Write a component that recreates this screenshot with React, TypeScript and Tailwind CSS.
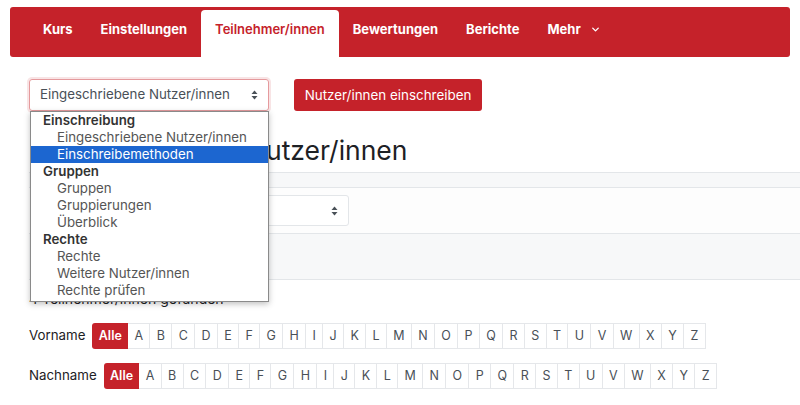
import { ChevronDown } from "lucide-react";

const RED = "bg-[#c5222a]";
const LETTERS = "ABCDEFGHIJKLMNOPQRSTUVWXYZ".split("");

const tabs = ["Kurs", "Einstellungen", "Teilnehmer/innen", "Bewertungen", "Berichte"];

const groups = [
  { label: "Einschreibung", items: ["Eingeschriebene Nutzer/innen", "Einschreibemethoden"] },
  { label: "Gruppen", items: ["Gruppen", "Gruppierungen", "Überblick"] },
  { label: "Rechte", items: ["Rechte", "Weitere Nutzer/innen", "Rechte prüfen"] },
];

const SortArrows = () => (
  <svg width="7" height="10" viewBox="0 0 7 10" className="fill-[#495057]">
    <path d="M3.5 0.5 L6.5 4 H0.5 Z" />
    <path d="M3.5 9.5 L6.5 6 H0.5 Z" />
  </svg>
);

const LetterBar = ({ label }: { label: string }) => (
  <div className="flex items-center gap-[7px]">
    <span className="text-[13.3px] text-[#1d2125]">{label}</span>
    <div className="flex h-[26px] text-[12.5px]">
      <span className={`${RED} text-white font-semibold flex items-center px-[6.35px] rounded-l-[3px]`}>
        Alle
      </span>
      {LETTERS.map((l) => (
        <span
          key={l}
          className="flex items-center px-[6.35px] text-[#495057] border border-l-0 border-[#e5e7ea]"
        >
          {l}
        </span>
      ))}
    </div>
  </div>
);

const App = () => {
  return (
    <div className="w-[800px] h-[405px] overflow-hidden bg-white font-['Inter',sans-serif]">
      <nav className={`mx-[10px] mt-[7px] h-[50px] ${RED} rounded-[3px] flex items-end pl-[19px]`}>
        {tabs.map((t) => {
          const active = t === "Teilnehmer/innen";
          return (
            <div
              key={t}
              className={
                active
                  ? "h-[47px] px-[14px] pt-[9px] leading-[20px] text-[13px] font-semibold text-[#c5222a] bg-white rounded-t-[4px]"
                  : "h-[47px] px-[14px] pt-[9px] leading-[20px] text-[13px] font-bold text-white"
              }
            >
              {t}
            </div>
          );
        })}
        <div className="h-[47px] px-[14px] pt-[9px] leading-[20px] text-[13px] font-bold text-white flex items-start gap-[9px]">
          Mehr
          <ChevronDown size={11} strokeWidth={3} className="mt-[5px]" />
        </div>
      </nav>

      <div className="pl-[29px] pt-[22px]">
        <div className="relative flex gap-[25px]">
          <div className="w-[240px] h-[32px] border border-[#e59a9d] rounded-[3px] shadow-[0_0_0_2px_rgba(197,34,42,0.12)] flex items-center justify-between pl-[10px] pr-[10px] text-[13.3px] text-[#495057]">
            <span>Eingeschriebene Nutzer/innen</span>
            <SortArrows />
          </div>
          <button className={`w-[188px] h-[32px] ${RED} rounded-[3px] text-white text-[13.4px]`}>
            Nutzer/innen einschreiben
          </button>

          <div className="absolute z-10 top-[32px] left-[1px] w-[239px] bg-white border border-[#8a8a8a] shadow-[0_2px_6px_rgba(0,0,0,0.25)] pb-[2px] text-[13.3px] leading-[17px]">
            {groups.map((g) => (
              <div key={g.label}>
                <div className="pl-[12px] font-semibold text-[#333]">{g.label}</div>
                {g.items.map((i) => (
                  <div
                    key={i}
                    className={
                      i === "Einschreibemethoden"
                        ? "pl-[26px] bg-[#1c66d0] text-white"
                        : "pl-[26px] text-[#555]"
                    }
                  >
                    {i}
                  </div>
                ))}
              </div>
            ))}
          </div>
        </div>

        <h2 className="mt-[22px] text-[26.5px] leading-[34px] text-[#1d2125]">
          Eingeschriebene Nutzer/innen
        </h2>

        <div className="mt-[5px] w-[771px] border-t border-[#e3e6e9]">
          <div className="h-[15px] bg-[#f7f8f9] border-b border-[#e3e6e9]" />
          <div className="h-[46px] border-b border-[#e3e6e9] bg-[#fdfdfd] flex items-center pl-[15px]">
            <div className="w-[305px] h-[31px] bg-white border border-[#e3e6e9] rounded-[3px] flex items-center justify-end pr-[10px]">
              <SortArrows />
            </div>
          </div>
          <div className="h-[46px] bg-[#f7f8f9] border-b border-[#e3e6e9]" />
        </div>

        <p className="mt-[9px] text-[14px] leading-[20px] text-[#1d2125]">4 Teilnehmer/innen gefunden</p>

        <div className="mt-[14px] flex flex-col gap-[14px]">
          <LetterBar label="Vorname" />
          <LetterBar label="Nachname" />
        </div>
      </div>
    </div>
  );
};

export default App;
